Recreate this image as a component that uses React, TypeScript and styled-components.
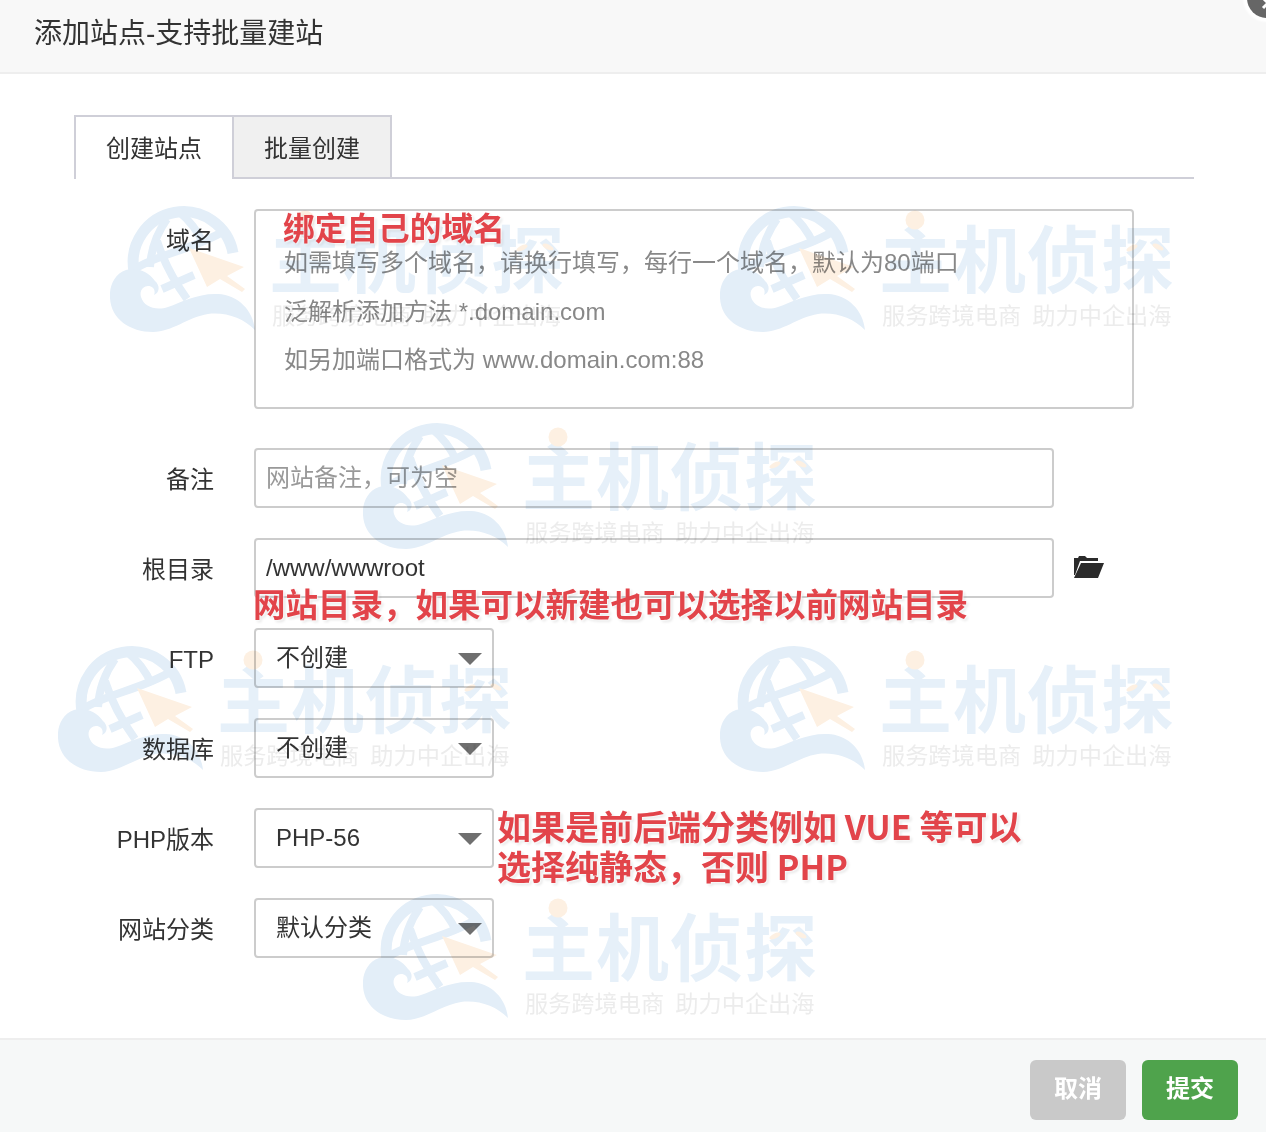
import React from 'react';
import styled, { createGlobalStyle } from 'styled-components';

const FONT = '"Liberation Sans", "Noto Sans CJK SC", sans-serif';

const Global = createGlobalStyle`
  html, body {
    margin: 0;
    padding: 0;
    background: #fff;
    font-family: ${FONT};
  }
  * { box-sizing: border-box; }
`;

const Layer = styled.div`
  position: relative;
  width: 1266px;
  height: 1132px;
  overflow: hidden;
  display: flex;
  flex-direction: column;
  background: #fff;
`;

const Header = styled.div`
  height: 74px;
  flex: none;
  display: flex;
  align-items: center;
  padding: 0 0 10px 34px;
  background: #f8f8f8;
  border-bottom: 2px solid #eee;
  color: #333;
  font-size: 28px;
`;

const Close = styled.div`
  position: absolute;
  left: 1247px;
  top: -22px;
  width: 40px;
  height: 40px;
  border-radius: 50%;
  background: #666;
  box-shadow: 0 0 2px 4px #fff;
  svg { position: absolute; left: 14px; top: 18px; }
`;

const Body = styled.div`
  flex: 1;
  padding: 41px 72px 0 74px;
`;

const Tabs = styled.div`
  display: flex;
  height: 64px;
  border-bottom: 2px solid #cfcfd8;
`;

const Tab = styled.div<{ $active?: boolean }>`
  width: ${({ $active }) => ($active ? '158px' : '160px')};
  height: ${({ $active }) => ($active ? '64px' : '62px')};
  display: flex;
  align-items: center;
  justify-content: center;
  padding-bottom: ${({ $active }) => ($active ? '4px' : '2px')};
  font-size: 24px;
  color: #333;
  background: ${({ $active }) => ($active ? '#fff' : '#f0f0f0')};
  border-top: 2px solid #cfcfd8;
  border-left: 2px solid #cfcfd8;
  border-right: ${({ $active }) => ($active ? '0' : '2px solid #cfcfd8')};
`;

const Form = styled.div`
  display: flex;
  flex-direction: column;
  gap: 30px;
  margin-top: 30px;
`;

const Row = styled.div<{ $tall?: boolean }>`
  display: flex;
  align-items: flex-start;
  gap: 40px;
  margin-bottom: ${({ $tall }) => ($tall ? '9px' : '0')};
`;

const Label = styled.div`
  width: 140px;
  flex: none;
  height: 60px;
  line-height: 63px;
  text-align: right;
  font-size: 24px;
  color: #333;
`;

const DomainBox = styled.div`
  width: 880px;
  height: 200px;
  padding: 28px 28px 0;
  border: 2px solid #ccc;
  border-radius: 4px;
  font-size: 24px;
  line-height: 48.5px;
  color: #888;
`;

const Hint = styled.div`
  white-space: nowrap;
`;

const Input = styled.input`
  width: 800px;
  height: 60px;
  padding: 0 10px;
  border: 2px solid #ccc;
  border-radius: 4px;
  background: transparent;
  font-family: ${FONT};
  font-size: 24px;
  color: #333;
  outline: none;
  &::placeholder { color: #999; opacity: 1; }
`;

const FolderButton = styled.div`
  height: 60px;
  margin-left: -20px;
  padding-bottom: 2px;
  display: flex;
  align-items: center;
  color: #2b2b2b;
`;

const Select = styled.div`
  width: 240px;
  height: 60px;
  padding: 0 10px 0 20px;
  display: flex;
  align-items: center;
  justify-content: space-between;
  border: 2px solid #ccc;
  border-radius: 4px;
  font-size: 24px;
  color: #333;
`;

const SelectValue = styled.span<{ $cjk: boolean }>`
  padding-bottom: ${({ $cjk }) => ($cjk ? '5px' : '0')};
`;

const Caret = styled.span`
  width: 0;
  height: 0;
  margin-top: 2px;
  border-left: 12px solid transparent;
  border-right: 12px solid transparent;
  border-top: 12px solid #6f6f6f;
`;

const Footer = styled.div`
  height: 94px;
  flex: none;
  display: flex;
  justify-content: flex-end;
  gap: 16px;
  padding: 20px 28px 0 0;
  background: #f6f8f8;
  border-top: 2px solid #eee;
`;

const Button = styled.div<{ $primary?: boolean }>`
  width: 96px;
  height: 60px;
  padding-bottom: 8px;
  display: flex;
  align-items: center;
  justify-content: center;
  border-radius: 6px;
  font-size: 24px;
  font-weight: 700;
  color: #fff;
  background: ${({ $primary }) => ($primary ? '#4fa34c' : '#c9c9c9')};
`;

const Note = styled.div<{ $x: number; $y: number; $size: number }>`
  position: absolute;
  left: ${({ $x }) => $x}px;
  top: ${({ $y }) => $y}px;
  font-family: "Noto Sans CJK SC", sans-serif;
  font-size: ${({ $size }) => $size}px;
  font-weight: 600;
  line-height: 40px;
  white-space: nowrap;
  color: #e2444a;
  text-shadow: 1px 1px 2px rgba(255, 255, 255, 0.9), 2px 2px 3px rgba(0, 0, 0, 0.12);
`;

const Mark = styled.div<{ $x: number; $y: number }>`
  position: absolute;
  left: ${({ $x }) => $x}px;
  top: ${({ $y }) => $y}px;
  width: 454px;
  height: 130px;
  pointer-events: none;
  mix-blend-mode: multiply;
  svg { position: absolute; left: 0; top: 0; }
`;

const MarkTitle = styled.div`
  position: absolute;
  left: 159px;
  top: 8px;
  width: 296px;
  font-family: "Noto Sans CJK SC", sans-serif;
  font-size: 73px;
  line-height: 84px;
  font-weight: 700;
  letter-spacing: 1px;
  white-space: nowrap;
  color: #e6f0f9;
`;

const MarkSub = styled.div`
  position: absolute;
  left: 162px;
  top: 93px;
  font-family: "Noto Sans CJK SC", sans-serif;
  font-size: 23.2px;
  word-spacing: 6px;
  line-height: 32px;
  white-space: pre;
  color: #ececec;
`;

const Watermark = ({ x, y }: { x: number; y: number }) => (
  <Mark $x={x} $y={y}>
    <MarkTitle>主机侦探</MarkTitle>
    <MarkSub>服务跨境电商 助力中企出海</MarkSub>
    <svg width="454" height="130" viewBox="0 0 454 130">
      <g fill="none" stroke="#e3eef8" strokeWidth="8">
        <path d="M24 66A50 50 0 0 1 123 48" strokeWidth="11" />
        <path d="M57 14C47 28 41 44 40 62" />
        <path d="M68 6C78 14 88 26 94 40" />
        <path d="M25 64C45 50 85 44 114 26" />
        <path d="M47 36C54 58 64 76 77 94" />
        <path d="M52 84L84 70" />
      </g>
      <path
        d="M145 125C143 105 128 90 108 89C88 88 72 97 58 102C46 106 34 102 31 92C29 85 34 81 38 81C43 81 46 85 44 90C50 88 50 80 45 76C38 66 26 62 16 65C4 69 -1 82 0 93C1 114 20 127 43 127C62 127 78 112 98 109C116 107 133 113 145 125Z"
        fill="#e3eef8"
      />
      <path d="M79 43L134 62L117 71L135 84L132 87L110 74L97 82Z" fill="#fdf0e2" />
      <circle cx="195" cy="15" r="9.5" fill="#fdf0e2" />
      <ellipse cx="412" cy="43" rx="6" ry="2.5" transform="rotate(-25 412 43)" fill="#fdf0e2" />
      <ellipse cx="438" cy="42" rx="6" ry="2.5" transform="rotate(25 438 42)" fill="#fdf0e2" />
    </svg>
  </Mark>
);

const marks = [
  { x: 110, y: 205 },
  { x: 720, y: 205 },
  { x: 363, y: 422 },
  { x: 58, y: 645 },
  { x: 720, y: 645 },
  { x: 363, y: 893 },
];

const selects = [
  { label: 'FTP', value: '不创建', cjk: true },
  { label: '数据库', value: '不创建', cjk: true },
  { label: 'PHP版本', value: 'PHP-56', cjk: false },
  { label: '网站分类', value: '默认分类', cjk: true },
];

export default function App() {
  return (
    <Layer>
      <Global />
      <Header>添加站点-支持批量建站</Header>
      <Close>
        <svg width="14" height="14" viewBox="0 0 14 14">
          <path d="M2 12L12 2M2 2l10 10" stroke="#fff" strokeWidth="3" />
        </svg>
      </Close>
      <Body>
        <Tabs>
          <Tab $active>创建站点</Tab>
          <Tab>批量创建</Tab>
        </Tabs>
        <Form>
          <Row $tall>
            <Label>域名</Label>
            <DomainBox>
              <Hint>如需填写多个域名，请换行填写，每行一个域名，默认为80端口</Hint>
              <Hint>泛解析添加方法 *.domain.com</Hint>
              <Hint>如另加端口格式为 www.domain.com:88</Hint>
            </DomainBox>
          </Row>
          <Row>
            <Label>备注</Label>
            <Input placeholder="网站备注，可为空" readOnly />
          </Row>
          <Row>
            <Label>根目录</Label>
            <Input value="/www/wwwroot" readOnly />
            <FolderButton>
              <svg width="30" height="24" viewBox="0 0 30 24">
                <path d="M0 3h4l1-2h6l2 2h11v3H6L1 20H0z" fill="currentColor" />
                <path d="M7 8h23l-6 15H0z" fill="currentColor" />
              </svg>
            </FolderButton>
          </Row>
          {selects.map((item) => (
            <Row key={item.label}>
              <Label>{item.label}</Label>
              <Select>
                <SelectValue $cjk={item.cjk}>{item.value}</SelectValue>
                <Caret />
              </Select>
            </Row>
          ))}
        </Form>
      </Body>
      <Footer>
        <Button>取消</Button>
        <Button $primary>提交</Button>
      </Footer>
      {marks.map((m) => (
        <Watermark key={`${m.x}-${m.y}`} x={m.x} y={m.y} />
      ))}
      <Note $x={283} $y={206} $size={31.7}>绑定自己的域名</Note>
      <Note $x={253} $y={583} $size={32.5}>网站目录，如果可以新建也可以选择以前网站目录</Note>
      <Note $x={497} $y={806} $size={34}>
        如果是前后端分类例如 VUE 等可以
        <br />
        选择纯静态，否则 PHP
      </Note>
    </Layer>
  );
}
